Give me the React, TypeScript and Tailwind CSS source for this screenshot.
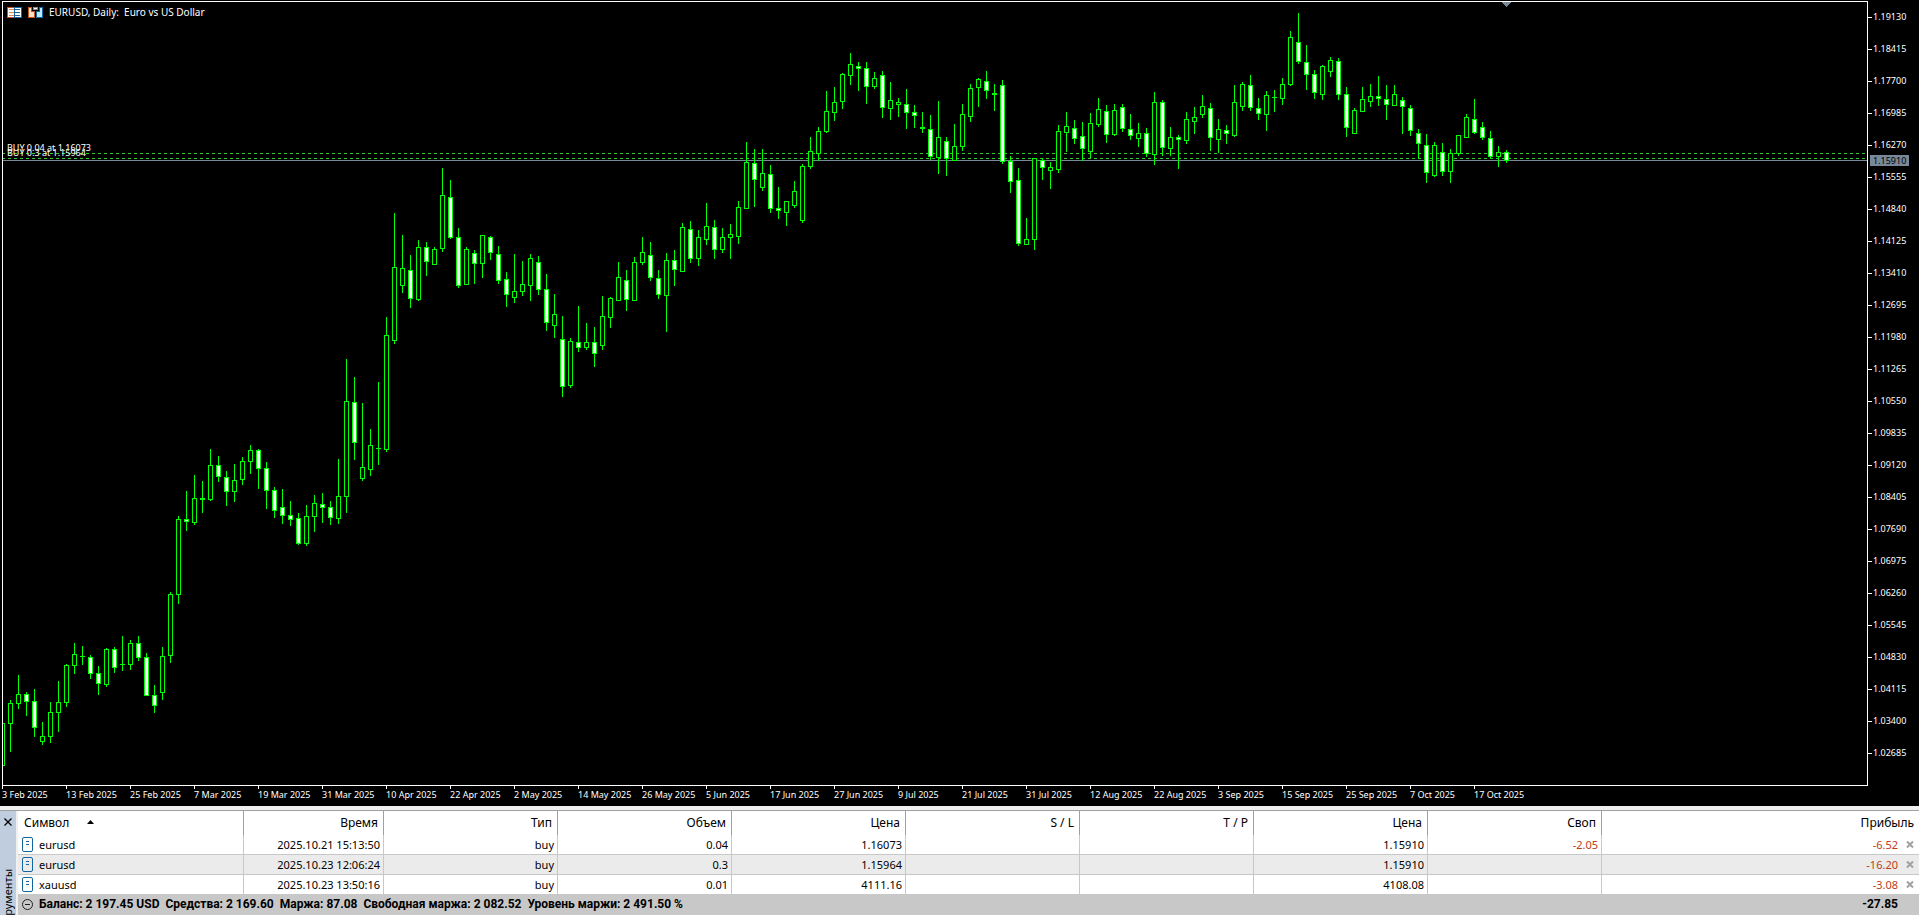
import React from "react";

// high, body top, body bottom, low (px from the top of the window), 1 = bearish
type Candle = [number, number, number, number, 0 | 1];

interface Position {
  symbol: string;
  time: string;
  type: string;
  volume: string;
  openPrice: string;
  price: string;
  swap: string;
  profit: string;
}

const STEP = 8;
const FIRST_X = 2;

const candles: Candle[] = [
  [723, 723, 766, 766, 0], [700, 703, 724, 752, 0], [675, 694, 704, 709, 0], [692, 694, 702, 716, 1],
  [689, 701, 728, 737, 1], [722, 736, 742, 745, 0], [702, 712, 737, 743, 0], [681, 702, 713, 732, 0],
  [664, 665, 703, 707, 0], [643, 654, 666, 674, 0], [646, 656, 657, 665, 0], [655, 657, 674, 679, 1],
  [666, 673, 684, 695, 1], [648, 649, 685, 687, 0], [647, 649, 668, 673, 1], [636, 664, 665, 671, 0],
  [640, 643, 665, 670, 0], [636, 643, 658, 661, 1], [653, 657, 696, 696, 1], [685, 695, 706, 713, 1],
  [647, 656, 693, 700, 0], [592, 594, 656, 663, 0], [516, 519, 595, 604, 0], [491, 519, 522, 531, 1],
  [475, 498, 523, 525, 0], [481, 498, 500, 513, 0], [449, 465, 500, 501, 0], [456, 465, 477, 482, 1],
  [471, 477, 492, 506, 1], [464, 480, 492, 502, 0], [457, 461, 480, 485, 0], [445, 450, 462, 474, 0],
  [449, 450, 469, 489, 1], [462, 468, 491, 509, 1], [487, 490, 511, 518, 1], [489, 507, 516, 524, 1],
  [501, 515, 520, 526, 1], [513, 518, 544, 545, 1], [505, 516, 544, 546, 0], [495, 503, 517, 532, 0],
  [493, 504, 508, 523, 1], [501, 507, 518, 525, 1], [459, 496, 519, 524, 0], [359, 401, 497, 513, 0],
  [377, 402, 443, 460, 1], [403, 467, 479, 481, 0], [429, 445, 470, 476, 0], [382, 448, 449, 465, 0],
  [317, 335, 450, 452, 0], [213, 267, 341, 344, 0], [235, 268, 286, 293, 0], [255, 270, 299, 308, 1],
  [240, 247, 300, 301, 0], [242, 247, 262, 276, 1], [247, 249, 265, 265, 0], [168, 195, 249, 252, 0],
  [180, 197, 238, 239, 1], [228, 237, 286, 288, 1], [247, 249, 285, 285, 0], [250, 253, 264, 284, 1],
  [235, 235, 264, 278, 0], [236, 237, 253, 260, 1], [246, 254, 281, 284, 1], [272, 279, 295, 307, 1],
  [254, 291, 298, 303, 0], [261, 284, 292, 296, 0], [254, 258, 286, 301, 0], [256, 262, 290, 295, 1],
  [274, 289, 323, 331, 1], [294, 314, 326, 338, 0], [316, 339, 387, 397, 1], [338, 341, 386, 388, 0],
  [306, 342, 348, 352, 1], [323, 342, 348, 350, 0], [327, 342, 354, 367, 1], [296, 316, 346, 350, 0],
  [297, 298, 318, 328, 0], [262, 277, 301, 301, 0], [270, 280, 300, 311, 1], [257, 262, 301, 301, 0],
  [237, 252, 263, 265, 0], [242, 255, 278, 281, 1], [270, 278, 295, 299, 1], [253, 260, 296, 332, 0],
  [250, 260, 270, 286, 1], [223, 227, 272, 272, 0], [221, 229, 259, 263, 1], [230, 237, 259, 266, 0],
  [203, 226, 240, 245, 0], [220, 227, 250, 259, 1], [228, 237, 250, 253, 0], [224, 234, 238, 259, 0],
  [201, 207, 237, 244, 0], [142, 162, 209, 209, 0], [149, 163, 180, 207, 1], [149, 173, 188, 191, 0],
  [165, 174, 209, 213, 1], [187, 208, 211, 219, 1], [201, 201, 213, 226, 0], [181, 191, 206, 208, 0],
  [164, 166, 221, 223, 0], [137, 151, 167, 169, 0], [127, 131, 154, 161, 0], [91, 111, 132, 133, 0],
  [87, 102, 113, 121, 0], [73, 74, 102, 109, 0], [53, 64, 76, 85, 0], [62, 66, 69, 91, 1],
  [62, 68, 87, 104, 1], [72, 78, 87, 89, 0], [71, 75, 108, 118, 1], [82, 100, 109, 120, 0],
  [98, 102, 105, 117, 0], [89, 104, 113, 129, 1], [105, 112, 116, 128, 1], [112, 127, 129, 133, 0],
  [115, 129, 157, 160, 1], [101, 137, 158, 174, 0], [137, 141, 159, 176, 1], [124, 146, 161, 161, 0],
  [104, 114, 147, 151, 0], [84, 88, 117, 122, 0], [78, 79, 88, 107, 0], [71, 81, 91, 99, 1],
  [84, 93, 95, 111, 0], [80, 85, 162, 164, 1], [156, 161, 182, 193, 1], [168, 180, 244, 246, 1],
  [218, 239, 245, 245, 0], [158, 158, 240, 250, 0], [158, 160, 168, 180, 1], [162, 167, 171, 189, 0],
  [125, 131, 170, 173, 0], [112, 126, 133, 152, 0], [120, 128, 139, 144, 1], [122, 136, 149, 161, 1],
  [113, 123, 152, 158, 0], [98, 109, 125, 127, 0], [105, 111, 135, 143, 1], [104, 110, 135, 136, 0],
  [104, 107, 129, 132, 1], [114, 129, 136, 140, 1], [123, 133, 139, 147, 0], [128, 133, 154, 157, 1],
  [92, 102, 155, 165, 0], [100, 102, 148, 156, 1], [127, 137, 149, 156, 0], [135, 137, 140, 169, 1],
  [112, 119, 141, 144, 0], [107, 117, 122, 134, 0], [95, 106, 115, 118, 0], [103, 108, 138, 151, 1],
  [119, 129, 140, 153, 0], [125, 130, 134, 144, 1], [85, 102, 136, 137, 0], [82, 84, 107, 111, 0],
  [75, 85, 108, 111, 1], [98, 108, 114, 120, 1], [91, 95, 115, 131, 0], [90, 97, 98, 112, 0],
  [78, 84, 99, 105, 0], [31, 37, 85, 86, 0], [13, 42, 62, 64, 1], [45, 62, 75, 90, 1],
  [70, 74, 93, 99, 1], [65, 66, 95, 100, 0], [57, 60, 72, 77, 0], [58, 61, 95, 100, 1],
  [87, 94, 128, 137, 1], [108, 110, 134, 134, 0], [87, 99, 112, 112, 0], [84, 96, 102, 107, 0],
  [76, 96, 99, 106, 1], [85, 99, 105, 120, 1], [85, 94, 106, 106, 0], [97, 100, 107, 134, 1],
  [105, 108, 131, 136, 1], [129, 133, 144, 159, 1], [134, 145, 173, 183, 1], [142, 145, 176, 177, 0],
  [143, 152, 172, 176, 1], [149, 153, 172, 183, 0], [135, 135, 154, 156, 0], [114, 117, 138, 138, 0],
  [99, 119, 133, 134, 1], [122, 127, 138, 140, 1], [131, 138, 157, 159, 1], [146, 152, 157, 167, 0],
  [150, 152, 161, 163, 1],
];

const prices = [
  "1.19130", "1.18415", "1.17700", "1.16985", "1.16270", "1.15555", "1.14840", "1.14125",
  "1.13410", "1.12695", "1.11980", "1.11265", "1.10550", "1.09835", "1.09120", "1.08405",
  "1.07690", "1.06975", "1.06260", "1.05545", "1.04830", "1.04115", "1.03400", "1.02685",
];

const dates = [
  "3 Feb 2025", "13 Feb 2025", "25 Feb 2025", "7 Mar 2025", "19 Mar 2025", "31 Mar 2025",
  "10 Apr 2025", "22 Apr 2025", "2 May 2025", "14 May 2025", "26 May 2025", "5 Jun 2025",
  "17 Jun 2025", "27 Jun 2025", "9 Jul 2025", "21 Jul 2025", "31 Jul 2025", "12 Aug 2025",
  "22 Aug 2025", "3 Sep 2025", "15 Sep 2025", "25 Sep 2025", "7 Oct 2025", "17 Oct 2025",
];

const positions: Position[] = [
  { symbol: "eurusd", time: "2025.10.21 15:13:50", type: "buy", volume: "0.04", openPrice: "1.16073", price: "1.15910", swap: "-2.05", profit: "-6.52" },
  { symbol: "eurusd", time: "2025.10.23 12:06:24", type: "buy", volume: "0.3", openPrice: "1.15964", price: "1.15910", swap: "", profit: "-16.20" },
  { symbol: "xauusd", time: "2025.10.23 13:50:16", type: "buy", volume: "0.01", openPrice: "4111.16", price: "4108.08", swap: "", profit: "-3.08" },
];

const CandleShape = ({ candle, x }: { candle: Candle; x: number }) => {
  const [high, top, bottom, low, down] = candle;
  return (
    <g>
      <rect x={x} y={high} width={1} height={low - high} fill="#00ff00" />
      <rect x={x - 2} y={top} width={5} height={bottom - top} fill="#00ff00" />
      {bottom - top > 2 && (
        <rect x={x - 1} y={top + 1} width={3} height={bottom - top - 2} fill={down ? "#ffffff" : "#000000"} />
      )}
    </g>
  );
};

const DepthIcon = () => (
  <svg width="15" height="11" viewBox="0 0 15 11" shapeRendering="crispEdges" className="block">
    <path d="M0 0h7v11H0z" fill="#c8501e" />
    <path d="M7 0h8v11H7z" fill="#1464a0" />
    <path d="M1 1h6v9H1zM8 1h6v9H8z" fill="#ffffff" />
    <path d="M2 2h5v1H2zM2 5h5v1H2zM2 8h5v1H2z" fill="#e08a5c" />
    <path d="M8 2h5v1H8zM8 5h5v1H8zM8 8h5v1H8z" fill="#1464a0" />
  </svg>
);

const TradeIcon = () => (
  <svg width="15" height="11" viewBox="0 0 15 11" shapeRendering="crispEdges" className="block">
    <path d="M0 0h4v4h3v7H0z" fill="#c8501e" />
    <path d="M1 1h2v4h3v5H1z" fill="#fbe3c8" />
    <path d="M11 0h4v11H8V4h3z" fill="#1464a0" />
    <path d="M12 1h2v9H9V5h3z" fill="#b8ecf8" />
    <path d="M5 0h5v3H5z" fill="#8c8c8c" />
    <path d="M6 1h3v1H6z" fill="#ffffff" />
  </svg>
);

const DocIcon = () => (
  <svg width="11" height="15" viewBox="0 0 11 15" fill="none" stroke="#1464a0" className="shrink-0">
    <rect x="0.5" y="0.5" width="10" height="14" rx="1.5" />
    <path d="M4 4.5h3M4 7.5h3" />
  </svg>
);

const Chart = () => (
  <section className="relative flex min-h-0 flex-1 flex-col overflow-hidden bg-black pl-0.5 pt-px font-['Noto_Sans',sans-serif] text-[9px] leading-3 text-white">
    <div className="flex min-h-0 flex-1">
      <div className="relative min-w-0 flex-1 overflow-hidden border border-white">
        <svg className="absolute left-0 top-0" width="1864" height="783" viewBox="3 2 1864 783" shapeRendering="crispEdges">
          <path d="M2 153.5h1865M2 158.5h1865" stroke="#32cd32" strokeDasharray="3 3" />
          <path d="M2 160.5h1865" stroke="#778899" />
          {candles.map((candle, i) => (
            <CandleShape key={i} candle={candle} x={FIRST_X + i * STEP} />
          ))}
          <path d="M1502 2h9v1h-1v1h-1v1h-1v1h-1v1h-1v-1h-1v-1h-1v-1h-1v-1h-1z" fill="#778899" />
        </svg>
        <div className="relative flex items-center pl-1 pt-1">
          <button type="button" aria-label="Depth of market"><DepthIcon /></button>
          <button type="button" aria-label="One click trading" className="ml-1.5"><TradeIcon /></button>
          <h1 className="ml-1.5 whitespace-pre text-[10px] leading-3">EURUSD, Daily:  Euro vs US Dollar</h1>
        </div>
        {/* open position labels */}
        <span className="absolute left-1 top-[140px]">BUY 0.04 at 1.16073</span>
        <span className="absolute left-1 top-[145px]">BUY 0.3 at 1.15964</span>
      </div>

      <div className="relative w-[51px] shrink-0">
        {prices.map((price) => (
          <div key={price} className="flex h-8 items-center">
            <span className="h-px w-1 bg-white" />
            <span className="ml-px">{price}</span>
          </div>
        ))}
        <span className="absolute left-0.5 top-[154px] w-[39px] bg-[#778899] pl-[3px] leading-[11px] text-black">1.15910</span>
      </div>
    </div>

    <div className="flex h-5 shrink-0 overflow-hidden">
      {dates.map((date) => (
        <div key={date} className="w-16 shrink-0 whitespace-nowrap">
          <div className="h-[3px] w-px bg-white" />
          <span className="block">{date}</span>
        </div>
      ))}
    </div>
  </section>
);

const headCell = "h-6 border-r border-[#a0a0a0] p-0 pr-[5px] pb-0.5 text-right font-normal";
const cell = "h-5 border-b border-r border-[#c8c8c8] p-0 pr-[3px] text-right group-last:h-[19px] group-last:border-b-0";

const Positions = () => (
  <table className="w-full table-fixed border-separate border-spacing-0 bg-white">
    <colgroup>
      <col className="w-[226px]" />
      <col className="w-[140px]" />
      <col className="w-[174px]" />
      <col className="w-[174px]" />
      <col className="w-[174px]" />
      <col className="w-[174px]" />
      <col className="w-[174px]" />
      <col className="w-[174px]" />
      <col className="w-[174px]" />
      <col />
    </colgroup>
    <thead className="text-[12px]">
      <tr>
        <th className="h-6 border-r border-[#a0a0a0] p-0 pb-0.5 pl-1.5 text-left font-normal">
          <div className="flex items-center">
            Символ
            <svg width="7" height="4" viewBox="0 0 7 4" className="ml-[18px]">
              <path d="M3.5 0L7 4H0z" fill="#000000" />
            </svg>
          </div>
        </th>
        <th className={headCell}>Время</th>
        <th className={headCell}>Тип</th>
        <th className={headCell}>Объем</th>
        <th className={headCell}>Цена</th>
        <th className={headCell}>S / L</th>
        <th className={headCell}>T / P</th>
        <th className={headCell}>Цена</th>
        <th className={headCell}>Своп</th>
        <th className="h-6 p-0 pb-0.5 pr-[5px] text-right font-normal">Прибыль</th>
      </tr>
    </thead>
    <tbody>
      {positions.map((p) => (
        <tr key={p.time} className="group even:bg-[#ebebeb]">
          <td className={cell}>
            <div className="flex items-center gap-1.5 pl-1">
              <DocIcon />
              {p.symbol}
            </div>
          </td>
          <td className={cell}>{p.time}</td>
          <td className={cell}>{p.type}</td>
          <td className={cell}>{p.volume}</td>
          <td className={cell}>{p.openPrice}</td>
          <td className={cell}></td>
          <td className={cell}></td>
          <td className={cell}>{p.price}</td>
          <td className={`${cell} text-[#c03c14]`}>{p.swap}</td>
          <td className="h-5 border-b border-[#c8c8c8] p-0 pr-[5px] text-[#c03c14] group-last:h-[19px] group-last:border-b-0">
            <div className="flex items-center justify-end gap-2">
              {p.profit}
              <button type="button" aria-label="Close position">
                <svg width="8" height="7" viewBox="0 0 8 7" className="block">
                  <path d="M1 0.5l6 6M7 0.5l-6 6" stroke="#a0a0a0" strokeWidth="2" />
                </svg>
              </button>
            </div>
          </td>
        </tr>
      ))}
    </tbody>
  </table>
);

const App = () => {
  return (
    <div className="flex h-screen flex-col overflow-hidden">
      <Chart />
      <section className="shrink-0 bg-[#f0f0f0] pt-1 font-['Noto_Sans',sans-serif] text-[11px] leading-[15px] text-black">
        <div className="flex border-t border-[#a0a0a0]">
          <div className="relative w-4 shrink-0 overflow-hidden bg-[#bfcddf]">
            <button type="button" aria-label="Close" className="absolute left-1 top-[7px]">
              <svg width="8" height="8" viewBox="0 0 8 8" className="block">
                <path d="M0.5 0.5l7 7M7.5 0.5l-7 7" stroke="#000000" strokeWidth="1.3" />
              </svg>
            </button>
            <span className="absolute left-0 top-[58px] rotate-180 [writing-mode:vertical-rl]">Инструменты</span>
          </div>
          <div className="ml-0.5 min-w-0 flex-1">
            <Positions />
            <div className="flex h-[21px] items-center bg-[#c8c8c8] pl-1 pr-[21px] font-['Roboto',sans-serif] text-[12px] font-bold">
              <svg width="11" height="11" viewBox="0 0 11 11" fill="none" stroke="#202020">
                <circle cx="5.5" cy="5.5" r="5" />
                <path d="M3 5.5h5" />
              </svg>
              <span className="ml-1.5 whitespace-pre">Баланс: 2 197.45 USD  Средства: 2 169.60  Маржа: 87.08  Свободная маржа: 2 082.52  Уровень маржи: 2 491.50 %</span>
              <span className="ml-auto">-27.85</span>
            </div>
          </div>
        </div>
      </section>
    </div>
  );
};

export default App;
